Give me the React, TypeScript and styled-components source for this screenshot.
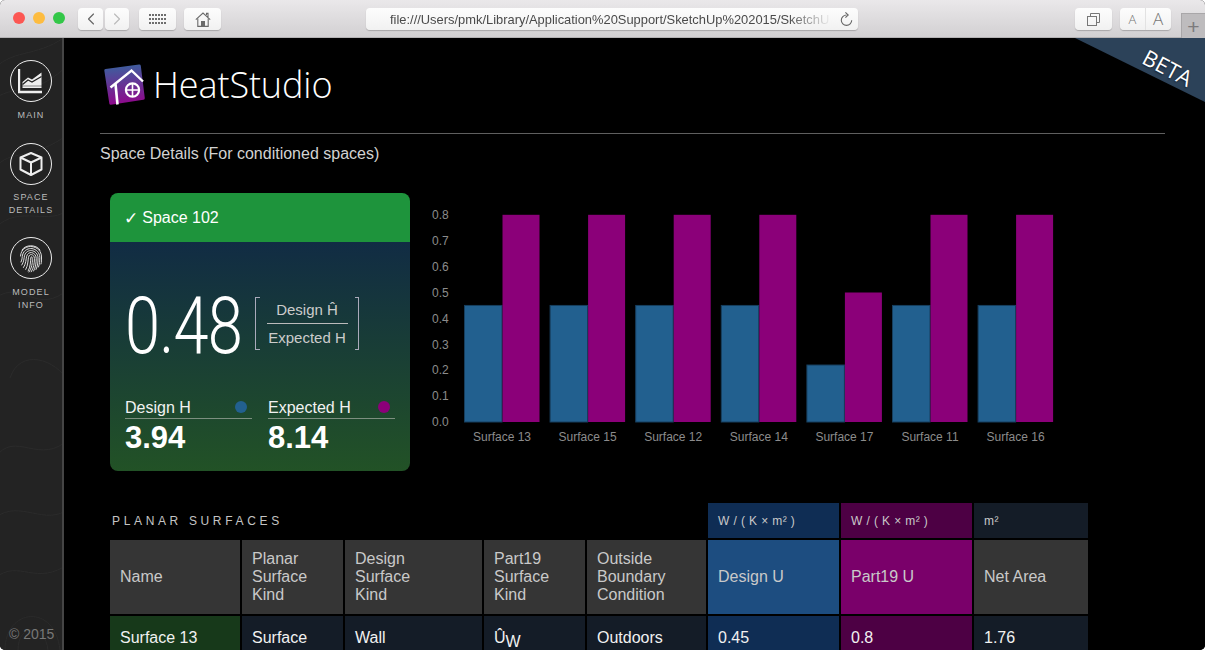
import React from 'react';
import styled, { createGlobalStyle } from 'styled-components';
import { ChevronLeft, ChevronRight } from 'lucide-react';

const Global = createGlobalStyle`
  html, body { margin: 0; padding: 0; background: #fff; overflow: hidden; }
  * { box-sizing: border-box; }
  body { font-family: "Liberation Sans", Arial, sans-serif; }
`;

const Window = styled.div`
  width: 1205px; height: 650px; display: flex; flex-direction: column;
  overflow: hidden; border-radius: 5px; background: #000;
`;

/* ---------- browser toolbar ---------- */
const Toolbar = styled.header`
  height: 38px; flex: none; display: flex; align-items: flex-start; padding: 8px 0 0 13px; position: relative;
  background: linear-gradient(#eae8ea, #d2d0d2); border-bottom: 1px solid #b4b2b4;
`;
const Lights = styled.div`display: flex; gap: 8px; margin-top: 4px; width: 65px; flex: none;`;
const Light = styled.span<{ $c: string }>`
  width: 12px; height: 12px; border-radius: 50%; background: ${p => p.$c};
`;
const ToolButton = styled.div<{ $w: number; $ml?: number }>`
  width: ${p => p.$w}px; height: 22px; margin-left: ${p => p.$ml ?? 0}px; flex: none;
  border-radius: 4px; background: linear-gradient(#fdfdfd, #f1f1f1);
  box-shadow: 0 1px 1px rgba(0,0,0,.22); display: flex; align-items: center; justify-content: center; color: #666;
`;
const UrlBar = styled(ToolButton)`
  justify-content: flex-start; padding: 0 6px 0 24px; gap: 8px;
`;
const UrlText = styled.span`
  width: 442px; flex: none; white-space: nowrap; font-size: 12.9px; color: #4a4a4a;
  -webkit-mask-image: linear-gradient(90deg, #000 90%, transparent 100%);
  mask-image: linear-gradient(90deg, #000 90%, transparent 100%);
`;
const FontSizes = styled(ToolButton)`
  justify-content: flex-start; font-family: "Open Sans", sans-serif; color: #777;
`;
const FontSizeA = styled.span<{ $s: number; $w: number; $line?: boolean }>`
  width: ${p => p.$w}px; font-size: ${p => p.$s}px; text-align: center; line-height: 22px; font-weight: 300;
  ${p => p.$line ? 'border-right: 1px solid #e2e2e2;' : ''}
`;
const NewTab = styled.div`
  position: absolute; right: 0; top: 13px; width: 24px; height: 25px;
  background: #bebcbe; border: 1px solid #a9a7a9; border-right: 0; border-bottom: 0;
  display: flex; align-items: center; justify-content: center; color: #7c7a7c;
  font-size: 21px; font-weight: 300; line-height: 1;
`;

/* ---------- sidebar ---------- */
const Body = styled.div`flex: 1; display: flex; min-height: 0;`;
const Sidebar = styled.nav`
  width: 64px; flex: none; background: #232323; border-right: 2px solid #454545;
  display: flex; flex-direction: column; align-items: center; padding-top: 22px; position: relative; overflow: hidden;
`;
const Contours = styled.svg`position: absolute; left: 0; top: 0; pointer-events: none;`;
const NavItem = styled.div<{ $h: number }>`
  height: ${p => p.$h}px; flex: none; display: flex; flex-direction: column; align-items: center; position: relative;
`;
const NavCircle = styled.div`
  width: 42px; height: 42px; border: 1.5px solid #eee; border-radius: 50%;
  display: flex; align-items: center; justify-content: center;
`;
const NavLabel = styled.div<{ $gap: number }>`
  margin-top: ${p => p.$gap}px; font-size: 9px; line-height: 13px; letter-spacing: 1.1px; text-align: center; color: #bcbcbc;
`;
const Copyright = styled.div`
  margin-top: auto; margin-bottom: 8px; font-size: 14px; line-height: 16px; color: #777; position: relative;
  white-space: nowrap; align-self: flex-start; margin-left: 9px;
`;

/* ---------- main ---------- */
const Main = styled.main`
  flex: 1; position: relative; overflow: hidden; background: #000; padding: 0 40px 0 36px; color: #fff;
`;
const Ribbon = styled.div`
  position: absolute; right: 0; top: 0; width: 130px; height: 64px; background: #2c4259;
  clip-path: polygon(0 0, 100% 0, 100% 100%);
`;
const RibbonText = styled.div`
  position: absolute; left: 63px; top: 16px; width: 60px; text-align: center;
  font-family: "Open Sans", sans-serif; font-size: 22px; line-height: 26px; color: #fff; transform: rotate(28deg);
  text-shadow: 0 1px 2px rgba(0,0,0,.6);
`;
const Masthead = styled.div`
  height: 96px; border-bottom: 1px solid #5f5f5f; display: flex; align-items: flex-start; padding: 22px 0 0 0; gap: 3px;
`;
const LogoName = styled.div`
  margin-top: 1px; font-family: "Open Sans", sans-serif; font-weight: 300; font-size: 36px; line-height: 48px; color: #fff; letter-spacing: -.1px;
`;
const Heading = styled.h1`
  margin: 10px 0 0; font-size: 16px; line-height: 20px; font-weight: 400; color: #d2d2d2;
`;
const Overview = styled.section`
  display: flex; margin: 29px 0 0 10px; align-items: flex-start; gap: 20px;
`;

const Card = styled.div`
  width: 300px; height: 278px; flex: none; border-radius: 8px; overflow: hidden;
  display: flex; flex-direction: column;
`;
const CardTitle = styled.div`
  height: 49px; flex: none; background: #1e943c; padding: 0 15px; display: flex; align-items: center; gap: 4px;
  font-size: 16px; color: #fff;
`;
const Check = styled.span`font-family: "DejaVu Sans", sans-serif; font-size: 17px; line-height: 20px; margin-left: -1px;`;
const CardBody = styled.div`flex: 1; background: linear-gradient(#112c44, #225226); overflow: hidden;`;
const RatioRow = styled.div`
  display: flex; align-items: center; margin: 55px 0 0 15px; height: 53px;
`;
const RatioValue = styled.div`
  width: 130px; flex: none; margin-top: 4px; font-family: "Roboto", sans-serif; font-weight: 300; font-size: 79px; line-height: 60px;
  letter-spacing: -1px; transform: scaleX(.8); transform-origin: 0 50%; white-space: nowrap; color: #fff;
`;
const Bracket = styled.div`
  width: 104px; height: 53px; position: relative; display: flex; flex-direction: column; align-items: center; justify-content: center;
  border-left: 1px solid #aab; border-right: 1px solid #aab; font-size: 15px; color: #ccc; line-height: 18px;
  &::before, &::after {
    content: ""; position: absolute; left: 0; right: 0; height: 1px;
    background: linear-gradient(90deg, #aab 4px, transparent 4px, transparent 99px, #aab 99px);
  }
  &::before { top: 0; } &::after { bottom: 0; }
`;
const FractionTop = styled.div`padding-bottom: 4px; width: 81px; text-align: center; border-bottom: 1px solid #bbb; white-space: nowrap;`;
const FractionBottom = styled.div`padding-top: 5px; white-space: nowrap;`;
const Stats = styled.div`display: flex; gap: 16px; margin: 48px 15px 0;`;
const Stat = styled.div`width: 127px; flex: none;`;
const StatLabel = styled.div`
  display: flex; justify-content: space-between; height: 21px; font-size: 16px; line-height: 20px; padding-right: 5px;
  border-bottom: 1px solid #7d8f80; color: #f2f2f2;
`;
const Dot = styled.span<{ $c: string }>`
  width: 12px; height: 12px; margin-top: 3px; border-radius: 50%; background: ${p => p.$c};
`;
const StatValue = styled.div`font-size: 31px; line-height: 38px; font-weight: 700; color: #fff;`;

const ChartBox = styled.div`width: 640px; height: 250px; margin-top: 12px; flex: none;`;
const AxisText = styled.text`font-family: "Liberation Sans", sans-serif; font-size: 12px; fill: #8c8c8c;`;

/* ---------- table ---------- */
const Table = styled.div`
  display: grid; grid-template-columns: 130px 101px 137px 101px 119px 131px 131px 114px; gap: 2px;
  grid-template-rows: 35px 74px 42px; margin: 32px 0 0 10px; width: 978px;
`;
const Caption = styled.div`
  grid-column: span 5; padding-left: 2px; display: flex; align-items: center; padding-top: 1px;
  font-size: 12px; letter-spacing: 3.65px; color: #c4c4c4;
`;
const Cell = styled.div<{ $bg: string; $fg?: string; $small?: boolean }>`
  background: ${p => p.$bg}; color: ${p => p.$fg ?? '#c9c9c9'}; display: flex; align-items: center; padding: 0 10px;
  font-size: ${p => p.$small ? 12 : 16}px; line-height: 18px; ${p => p.$small ? 'letter-spacing: .4px;' : ''}
`;
const DataCell = styled(Cell)`align-items: flex-start; padding-top: 13px; color: #f1f1f1;`;
const Sub = styled.span`font-size: 16px; position: relative; top: 4px;`;

/* ---------- drawings ---------- */
const groups: [string, number, number][] = [
  ['Surface 13', 0.45, 0.8], ['Surface 15', 0.45, 0.8], ['Surface 12', 0.45, 0.8], ['Surface 14', 0.45, 0.8],
  ['Surface 17', 0.22, 0.5], ['Surface 11', 0.45, 0.8], ['Surface 16', 0.45, 0.8],
];
const ticks = ['0.8','0.7','0.6','0.5','0.4','0.3','0.2','0.1','0.0'];

const Chart = () => {
  const unit = 259;
  return (
    <svg width="640" height="250" viewBox="430 205 640 250">
      {ticks.map((t, i) => <AxisText key={t} x="432" y={219 + i * 25.9}>{t}</AxisText>)}
      {groups.map(([n, a, b], i) => {
        const x = 464.5 + i * 85.6;
        return (
          <g key={n}>
            <rect x={x} y={422 - a * unit} width={37.5} height={a * unit} fill="#22608f" stroke="#173f5e" strokeWidth="1" />
            <rect x={x + 38} y={422 - b * unit} width={37} height={b * unit} fill="#8b0079" />
            <AxisText x={x + 37.5} y="441" textAnchor="middle">{n}</AxisText>
          </g>
        );
      })}
    </svg>
  );
};

const Logo = () => (
  <svg width="50" height="50" viewBox="100 60 50 50">
    <defs>
      <linearGradient id="lg" x1="0" y1="0" x2="0.1" y2="1">
        <stop offset="0" stopColor="#38649f" />
        <stop offset="1" stopColor="#8d0a8c" />
      </linearGradient>
    </defs>
    <path d="M105.5 69 L139 64.4 Q140.5 64.2 140.8 65.8 L144.8 98 Q145 99.5 143.4 99.8 L111 104.8 Q109.6 105 109.3 103.5 L104.3 70.5 Q104.1 69.2 105.5 69Z" fill="url(#lg)" />
    <path d="M110.5 87.5 L131.5 70.5 L143 81.5" fill="none" stroke="#fff" strokeWidth="2.4" />
    <path d="M115.5 84 L117.5 104.5" stroke="#fff" strokeWidth="2.6" />
    <circle cx="132.5" cy="90" r="6.6" fill="none" stroke="#fff" strokeWidth="2.2" />
    <path d="M132.5 83.5 V96.5 M126 90 H139" stroke="#fff" strokeWidth="1.6" />
  </svg>
);

const MainIcon = () => (
  <svg width="26" height="26" viewBox="0 0 26 26">
    <path d="M2 1 V24 H25" fill="none" stroke="#eee" strokeWidth="2.4" transform="translate(-1 0)" />
    <path d="M4.5 14 L10 9.5 L14 11.5 L23.5 4.5 V20 H4.5Z" fill="#eee" />
    <path d="M4.5 16.5 L10 12 L14 14 L23.5 8.5" fill="none" stroke="#232323" strokeWidth="1.3" />
    <path d="M4 18 H24" stroke="#232323" strokeWidth="1" opacity=".5" />
  </svg>
);
const CubeIcon = () => (
  <svg width="26" height="26" viewBox="0 0 26 26" fill="none" stroke="#eee" strokeWidth="2" strokeLinejoin="round">
    <path d="M13 2 L23.5 6.5 V18.5 L13 24 L2.5 18.5 V6.5Z" />
    <path d="M2.5 6.5 L13 11.5 L23.5 6.5 M13 11.5 V24" />
  </svg>
);
const FingerIcon = () => (
  <svg width="26" height="30" viewBox="0 0 26 30" fill="none" stroke="#ddd" strokeWidth="1" strokeLinecap="round">
    <path d="M4 7 C7 1.5 18 1 22 7" />
    <path d="M2.5 13 C3 5 10 3 14 3.6 C19 4.2 23.5 8 23.5 14 C23.5 17 23.6 19 23 21" />
    <path d="M3 19 C4.5 16 4 14 4.5 12 C6 6.5 11 5.2 14 5.6 C18 6.2 21.8 9.5 21.8 14.5 C21.8 18 21.6 21 20.5 24" />
    <path d="M3.8 22 C6 19 6 15 6.5 12.6 C7.6 8.8 11 7.2 13.6 7.6 C17 8 20 10.8 20 15 C20 19 19.8 23 18 26.5" />
    <path d="M5.5 24.5 C8 21 8 16 8.6 13.4 C9.3 10.6 11.5 9.4 13.4 9.6 C16 9.9 18.2 12 18.2 15.4 C18.2 20 17.8 24 15.6 28" />
    <path d="M7.8 26.4 C10 22.5 10 17 10.5 14.4 C11 12 12.4 11.4 13.4 11.6 C15 11.9 16.4 13 16.4 15.6 C16.4 20.5 15.8 24.8 13.2 28.8" />
    <path d="M10.2 28 C12.4 24 12.6 18 12.8 15 C12.9 13.8 13.6 13.4 14 14 C14.6 15 14.6 20 13.4 24 C12.8 26 12 27.6 11 29" />
  </svg>
);
const GridIcon = () => (
  <svg width="17" height="11" viewBox="0 0 17 11" fill="#6e6e6e">
    {[0, 4, 8].map(y => [0, 3, 6, 9, 12, 15].map(x => <rect key={`${x}-${y}`} x={x} y={y} width="2" height="2" />))}
  </svg>
);
const HomeIcon = () => (
  <svg width="16" height="15" viewBox="0 0 16 15" fill="none" stroke="#6a6a6a" strokeWidth="1.1">
    <path d="M.8 7.6 L8 1 L15.2 7.6 M11.5 3 V1.4 H13 V5" />
    <path d="M2.8 6.5 V14.4 H13.2 V6.5" />
    <rect x="6" y="9" width="4" height="5.4" fill="#6a6a6a" stroke="none" />
  </svg>
);
const TabsIcon = () => (
  <svg width="13" height="13" viewBox="0 0 13 13" fill="none" stroke="#777" strokeWidth="1">
    <rect x=".5" y="3.5" width="9" height="9" />
    <path d="M3.5 3.5 V.5 H12.5 V9.5 H9.5" />
  </svg>
);
const ReloadIcon = () => (
  <svg width="13" height="14" viewBox="0 0 13 14" fill="none" stroke="#666" strokeWidth="1.1" style={{ flex: 'none' }}>
    <path d="M6.5 3 A5.2 5.2 0 1 0 11.7 8.2" />
    <path d="M5.4 .4 L8.2 3 L5.4 5.6" />
  </svg>
);

const headerCols = [
  ['Name'], ['Planar', 'Surface', 'Kind'], ['Design', 'Surface', 'Kind'], ['Part19', 'Surface', 'Kind'],
  ['Outside', 'Boundary', 'Condition'],
];
const Lines = ({ lines }: { lines: string[] }) => (
  <div>{lines.map(l => <div key={l}>{l}</div>)}</div>
);

export default function App() {
  return (
    <Window>
      <Global />
      <Toolbar>
        <Lights>
          <Light $c="#fc5753" /><Light $c="#fdbc40" /><Light $c="#33c748" />
        </Lights>
        <ToolButton $w={25}><ChevronLeft size={20} strokeWidth={1.4} color="#666" /></ToolButton>
        <ToolButton $w={24} $ml={2}><ChevronRight size={20} strokeWidth={1.4} color="#bbb" /></ToolButton>
        <ToolButton $w={37} $ml={10}><GridIcon /></ToolButton>
        <ToolButton $w={37} $ml={8}><HomeIcon /></ToolButton>
        <UrlBar $w={492} $ml={145}>
          <UrlText>file:///Users/pmk/Library/Application%20Support/SketchUp%202015/SketchU</UrlText>
          <ReloadIcon />
        </UrlBar>
        <ToolButton $w={37} $ml={217}><TabsIcon /></ToolButton>
        <FontSizes $w={51} $ml={8}>
          <FontSizeA $s={13} $w={26} $line>A</FontSizeA>
          <FontSizeA $s={17} $w={24}>A</FontSizeA>
        </FontSizes>
        <NewTab>+</NewTab>
      </Toolbar>
      <Body>
        <Sidebar>
          <Contours width="62" height="612" viewBox="0 0 62 612" fill="none" stroke="#2b2b2b" strokeWidth="1">
            <path d="M-5 30 C15 10 40 20 70 -5 M-5 60 C20 45 35 60 70 25 M-5 130 C10 110 30 125 70 95" />
            <path d="M-5 190 C20 165 50 190 70 170 M-5 260 C25 240 35 280 70 250 M10 340 C20 310 55 320 70 345" />
            <path d="M-5 420 C15 390 40 430 70 400 M-5 480 C20 460 45 490 70 470 M5 612 C5 570 55 565 60 612" />
            <path d="M-5 540 C20 520 35 550 70 525 M18 612 C18 585 45 585 48 612" />
          </Contours>
          <NavItem $h={83}>
            <NavCircle><MainIcon /></NavCircle>
            <NavLabel $gap={7}>MAIN</NavLabel>
          </NavItem>
          <NavItem $h={94}>
            <NavCircle><CubeIcon /></NavCircle>
            <NavLabel $gap={6}>SPACE<br />DETAILS</NavLabel>
          </NavItem>
          <NavItem $h={80}>
            <NavCircle><FingerIcon /></NavCircle>
            <NavLabel $gap={7}>MODEL<br />INFO</NavLabel>
          </NavItem>
          <Copyright>© 2015</Copyright>
        </Sidebar>
        <Main>
          <Ribbon><RibbonText>BETA</RibbonText></Ribbon>
          <Masthead>
            <Logo />
            <LogoName>HeatStudio</LogoName>
          </Masthead>
          <Heading>Space Details (For conditioned spaces)</Heading>
          <Overview>
            <Card>
              <CardTitle><Check>✓</Check> Space 102</CardTitle>
              <CardBody>
                <RatioRow>
                  <RatioValue>0.48</RatioValue>
                  <Bracket>
                    <FractionTop>Design Ĥ</FractionTop>
                    <FractionBottom>Expected H</FractionBottom>
                  </Bracket>
                </RatioRow>
                <Stats>
                  <Stat>
                    <StatLabel>Design H<Dot $c="#22608f" /></StatLabel>
                    <StatValue>3.94</StatValue>
                  </Stat>
                  <Stat>
                    <StatLabel>Expected H<Dot $c="#8b0079" /></StatLabel>
                    <StatValue>8.14</StatValue>
                  </Stat>
                </Stats>
              </CardBody>
            </Card>
            <ChartBox><Chart /></ChartBox>
          </Overview>
          <Table>
            <Caption>PLANAR SURFACES</Caption>
            <Cell $bg="#0f2d54" $small>W / ( K × m² )</Cell>
            <Cell $bg="#4d0044" $small>W / ( K × m² )</Cell>
            <Cell $bg="#141c27" $small>m²</Cell>

            {headerCols.map(c => <Cell key={c.join()} $bg="#353535"><Lines lines={c} /></Cell>)}
            <Cell $bg="#1d4d80">Design U</Cell>
            <Cell $bg="#7a006a">Part19 U</Cell>
            <Cell $bg="#353535">Net Area</Cell>

            <DataCell $bg="#17391a">Surface 13</DataCell>
            <DataCell $bg="#141c27">Surface</DataCell>
            <DataCell $bg="#141c27">Wall</DataCell>
            <DataCell $bg="#141c27"><span>Û<Sub>W</Sub></span></DataCell>
            <DataCell $bg="#141c27">Outdoors</DataCell>
            <DataCell $bg="#0f2d54">0.45</DataCell>
            <DataCell $bg="#4d0044">0.8</DataCell>
            <DataCell $bg="#141c27">1.76</DataCell>
          </Table>
        </Main>
      </Body>
    </Window>
  );
}
